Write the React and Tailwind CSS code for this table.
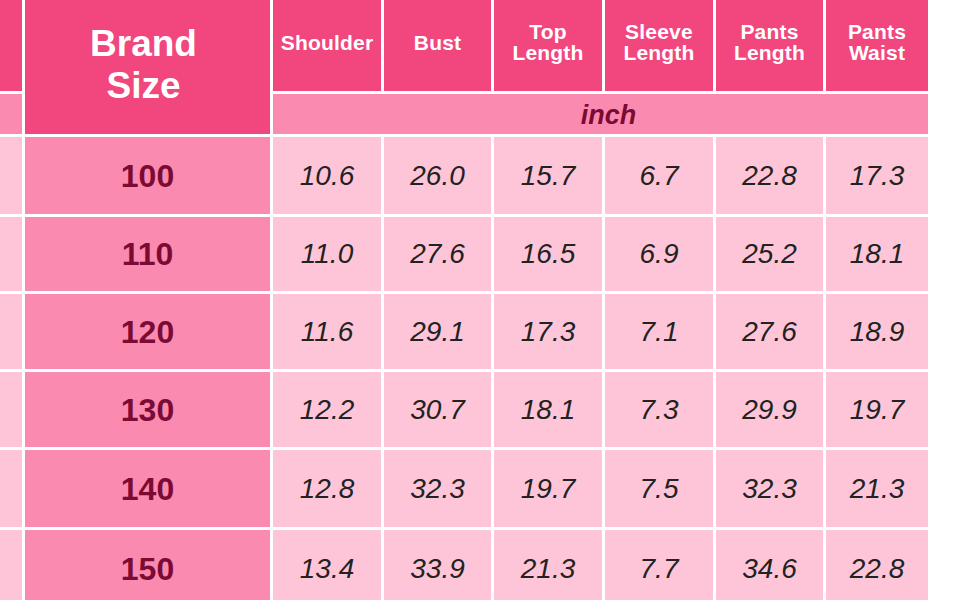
const headers = [
  ["Shoulder"],
  ["Bust"],
  ["Top", "Length"],
  ["Sleeve", "Length"],
  ["Pants", "Length"],
  ["Pants", "Waist"],
];

const rows = [
  ["100", "10.6", "26.0", "15.7", "6.7", "22.8", "17.3"],
  ["110", "11.0", "27.6", "16.5", "6.9", "25.2", "18.1"],
  ["120", "11.6", "29.1", "17.3", "7.1", "27.6", "18.9"],
  ["130", "12.2", "30.7", "18.1", "7.3", "29.9", "19.7"],
  ["140", "12.8", "32.3", "19.7", "7.5", "32.3", "21.3"],
  ["150", "13.4", "33.9", "21.3", "7.7", "34.6", "22.8"],
];

const App = () => {
  return (
    <div className="w-[970px] h-[600px] overflow-hidden bg-white font-['Liberation_Sans',Arial,sans-serif]">
      <div className="grid grid-cols-[22px_245px_108px_107px_108px_108px_107px_102px] grid-rows-[91px_40px_77px_74px_75px_75px_77px_77px] gap-[3px]">
        {/* header row */}
        <div className="bg-[#f2467e]" />
        <div className="row-span-2 bg-[#f2467e] flex flex-col items-center justify-center pr-2 pb-1 text-white font-bold text-[37px] leading-[42px]">
          <span>Brand</span>
          <span>Size</span>
        </div>
        {headers.map((h, i) => (
          <div
            key={i}
            className="bg-[#f2467e] flex flex-col items-center justify-center pb-[7px] text-white font-bold text-[21px] leading-[21px] tracking-[0.2px]"
          >
            {h.map((t) => (
              <span key={t}>{t}</span>
            ))}
          </div>
        ))}

        {/* unit row */}
        <div className="bg-[#fb8ab1]" />
        <div className="col-span-6 bg-[#fb8ab1] flex items-center justify-center pl-4 pt-[2px] text-[#7b0b33] font-bold italic text-[27px]">
          inch
        </div>

        {/* data rows */}
        {rows.map((r) => (
          <div key={r[0]} className="contents">
            <div className="bg-[#fec5d8]" />
            <div className="bg-[#fa8ab0] flex items-center justify-center text-[#7b0b33] font-bold text-[32px]">
              {r[0]}
            </div>
            {r.slice(1).map((v, j) => (
              <div
                key={j}
                className="bg-[#fec5d8] flex items-center justify-center text-[#222] italic text-[28px]"
              >
                {v}
              </div>
            ))}
          </div>
        ))}
      </div>
    </div>
  );
};

export default App;
